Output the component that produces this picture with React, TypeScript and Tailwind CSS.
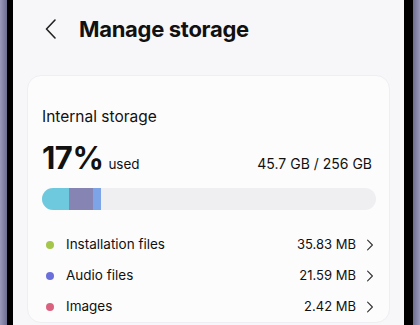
import React from "react";

const rows = [
  { label: "Installation files", size: "35.83 MB", dot: "bg-[#a4c64a]" },
  { label: "Audio files", size: "21.59 MB", dot: "bg-[#6b6fdb]" },
  { label: "Images", size: "2.42 MB", dot: "bg-[#d9627f]" },
];

function Chevron({ className }: { className?: string }) {
  return (
    <svg viewBox="0 0 10 16" className={className} fill="none" stroke="currentColor" strokeWidth={1.4} strokeLinecap="round" strokeLinejoin="round">
      <path d="M2 2l6 6-6 6" />
    </svg>
  );
}

export default function App() {
  return (
    <div className="flex h-[325px] w-[420px] overflow-hidden bg-black" style={{ fontFamily: "Inter, 'Noto Sans', sans-serif" }}>
      <div className="w-[7px] bg-gradient-to-r from-[#9a9abb] to-[#6e6e92]" />
      <div className="w-[6px] bg-black" />
      <div className="flex-1 bg-[#f7f7f9] text-[#111]">
        <div className="flex h-[56px] items-center pl-[32px] pt-[2px]">
          <svg viewBox="0 0 12 20" className="h-[20px] w-[12px] text-[#222]" fill="none" stroke="currentColor" strokeWidth={1.6} strokeLinecap="round" strokeLinejoin="round">
            <path d="M10 1L1.5 10 10 19" />
          </svg>
          <h1 className="ml-[22px] text-[22px] font-bold tracking-[-0.3px]">Manage storage</h1>
        </div>
        <div className="mx-[14px] mt-[19px] rounded-[14px] border border-[#efeff3] bg-[#fcfcfd] pl-[14px] pr-[13px] pt-[31px]">
          <div className="text-[15.5px] leading-[20px]">Internal storage</div>
          <div className="mt-[14px] flex items-end justify-between">
            <div className="flex items-baseline">
              <span className="text-[31px] font-bold leading-[34px] tracking-[-0.5px]">17%</span>
              <span className="ml-[5px] text-[13.5px]">used</span>
            </div>
            <span className="mb-[1px] pr-[4px] text-[14px]">45.7 GB / 256 GB</span>
          </div>
          <div className="mt-[13px] flex h-[22px] overflow-hidden rounded-full bg-[#efeff2]">
            <div className="w-[27px] bg-[#6fc9de]" />
            <div className="w-[24px] bg-[#8584b3]" />
            <div className="w-[8px] bg-[#7ea4e8]" />
          </div>
          <div className="mt-[19px] flex flex-col">
            {rows.map((r) => (
              <div key={r.label} className="flex h-[31px] items-center">
                <span className={`ml-[4px] h-[8px] w-[8px] rounded-full ${r.dot}`} />
                <span className="ml-[12px] text-[13.5px]">{r.label}</span>
                <span className="ml-auto text-[13px]">{r.size}</span>
                <Chevron className="ml-[10px] mr-[2px] h-[14px] w-[8px] text-[#333]" />
              </div>
            ))}
          </div>
        </div>
      </div>
      <div className="w-[9px] bg-black" />
      <div className="w-[7px] bg-gradient-to-r from-[#6e6e92] to-[#9a9abb]" />
    </div>
  );
}
